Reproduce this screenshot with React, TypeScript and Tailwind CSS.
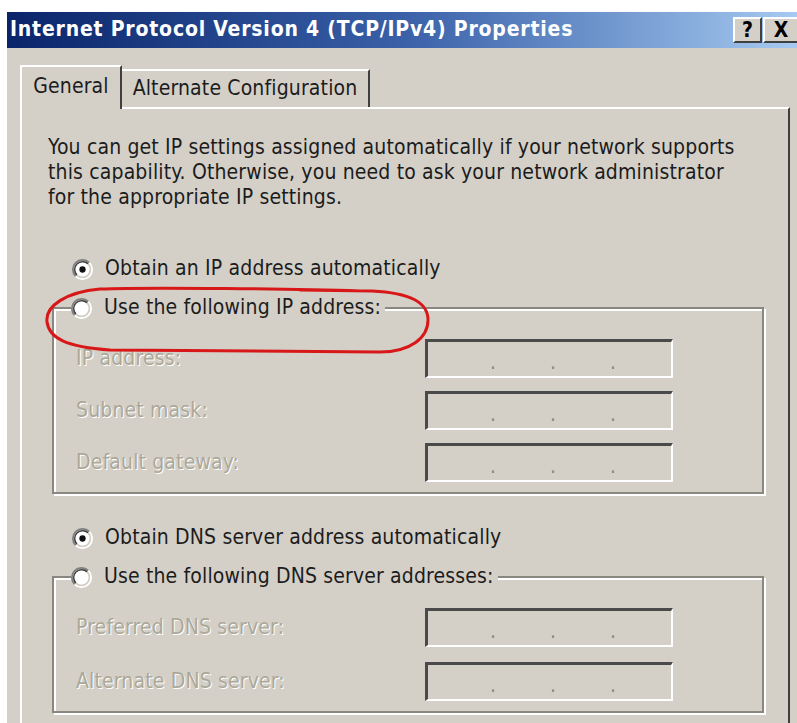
import React from 'react'

// classic 3D radio dot, drawn at 21px
function Radio({ checked }: { checked?: boolean }) {
  return (
    <svg width={21} height={21} viewBox="0 0 12 12" className="shrink-0">
      <path d="M2.11 9.89 A5.5 5.5 0 0 1 9.89 2.11" fill="none" stroke="#808080" strokeWidth={1} />
      <path d="M9.89 2.11 A5.5 5.5 0 0 1 2.11 9.89" fill="none" stroke="#ffffff" strokeWidth={1} />
      <path d="M2.82 9.18 A4.5 4.5 0 0 1 9.18 2.82" fill="none" stroke="#404040" strokeWidth={1} />
      <path d="M9.18 2.82 A4.5 4.5 0 0 1 2.82 9.18" fill="none" stroke="#d4d0c8" strokeWidth={1} />
      <circle cx={6} cy={6} r={4} fill="#ffffff" />
      {checked ? <circle cx={6} cy={6} r={1.8} fill="#111111" /> : null}
    </svg>
  )
}

function RadioRow({ label, checked }: { label: string; checked?: boolean }) {
  return (
    <div className="flex items-center h-[30px] gap-[12px] text-[#1c1c1c] whitespace-nowrap">
      <Radio checked={checked} />
      <span>{label}</span>
    </div>
  )
}

// greyed-out IP box with the three separators
function IpField({ label }: { label: string }) {
  return (
    <div className="flex items-center">
      <span className="w-[371px] pl-[22px] text-[#aca899] [text-shadow:1px_1px_0_#ffffff] whitespace-nowrap">
        {label}
      </span>
      <div className="w-[248px] h-[39px] border-t-[3px] border-l-[3px] border-t-[#4a4a4a] border-l-[#4a4a4a] border-b-2 border-r-2 border-b-white border-r-white bg-[#d4d0c8] flex items-center pl-[62px] gap-[54px] text-[#8c887f] leading-none pt-[6px]">
        <span className="w-[6px]">.</span>
        <span className="w-[6px]">.</span>
        <span className="w-[6px]">.</span>
      </div>
    </div>
  )
}

function GroupBox({ legend, fields, gap }: { legend: string; fields: string[]; gap: string }) {
  return (
    <fieldset className="mt-[9px] ml-[30px] mr-[24px] px-0 border-2 border-[#8a8680] shadow-[inset_2px_2px_0_#ffffff,2px_2px_0_#ffffff]">
      <legend className="ml-[17px] pr-[4px] bg-[#d4d0c8]">
        <RadioRow label={legend} />
      </legend>
      <div className={`flex flex-col pt-[16px] pb-[10px] ${gap}`}>
        {fields.map((f) => (
          <IpField key={f} label={f} />
        ))}
      </div>
    </fieldset>
  )
}

export default function App() {
  return (
    <div className="relative w-[797px] h-[723px] overflow-hidden bg-white font-['DejaVu_Sans_Condensed','DejaVu_Sans',sans-serif] text-[21px] tracking-[0.15px]">
      <div className="ml-[7px] mt-[12px] h-[711px] bg-[#d4d0c8] flex flex-col">
        {/* title bar */}
        <div className="h-[36px] shrink-0 flex items-center justify-between bg-linear-to-r from-[#0a246a] via-[#3a60a8] to-[#a6caf0]">
          <span className="pl-[3px] font-bold text-white whitespace-nowrap tracking-[0.8px]">
            Internet Protocol Version 4 (TCP/IPv4) Properties
          </span>
          <div className="flex items-center gap-[1px] tracking-normal">
            <div className="w-[29px] h-[26px] bg-[#d4d0c8] border-t-2 border-l-2 border-white border-b-2 border-r-2 border-b-[#404040] border-r-[#404040] flex items-center justify-center font-bold text-black leading-none">
              ?
            </div>
            <div className="w-[34px] h-[26px] bg-[#d4d0c8] border-t-2 border-l-2 border-white border-b-2 border-b-[#404040] flex items-center justify-center font-bold text-black leading-none">
              X
            </div>
          </div>
        </div>

        <div className="flex-1 flex flex-col pl-[13px] pr-[7px]">
          {/* tabs */}
          <div className="mt-[17px] flex items-end h-[42px]">
            <div className="relative z-10 -mb-[2px] w-[102px] h-[44px] bg-[#d4d0c8] border-t-2 border-l-2 border-white border-r-2 border-r-[#404040] flex items-center justify-center text-[#1c1c1c] pb-[2px]">
              General
            </div>
            <div className="w-[248px] h-[38px] border-t-2 border-white border-r-2 border-r-[#404040] flex items-center justify-center text-[#1c1c1c]">
              Alternate Configuration
            </div>
          </div>

          {/* page */}
          <div className="flex-1 border-t-2 border-l-2 border-white border-r-2 border-r-[#404040] flex flex-col">
            <p className="mt-[26px] pl-[26px] leading-[25px] text-[#1c1c1c] whitespace-nowrap">
              You can get IP settings assigned automatically if your network supports
              <br />
              this capability. Otherwise, you need to ask your network administrator
              <br />
              for the appropriate IP settings.
            </p>

            <div className="mt-[44px] ml-[50px]">
              <RadioRow label="Obtain an IP address automatically" checked />
            </div>
            <GroupBox
              legend="Use the following IP address:"
              fields={['IP address:', 'Subnet mask:', 'Default gateway:']}
              gap="gap-[13px]"
            />

            <div className="mt-[29px] ml-[50px]">
              <RadioRow label="Obtain DNS server address automatically" checked />
            </div>
            <GroupBox
              legend="Use the following DNS server addresses:"
              fields={['Preferred DNS server:', 'Alternate DNS server:']}
              gap="gap-[15px]"
            />
          </div>
        </div>
      </div>

      {/* red hand-drawn loop */}
      <svg className="absolute left-0 top-0 pointer-events-none" width={797} height={723}>
        <path
          d="M360 291 C300 289 150 287 100 289 C66 292 45 306 47 322 C49 338 66 347 110 350 L380 352 C410 352 428 338 428 320 C428 302 410 293 372 291 L300 290"
          fill="none"
          stroke="#d81818"
          strokeWidth={3}
          strokeLinecap="round"
        />
      </svg>
    </div>
  )
}
